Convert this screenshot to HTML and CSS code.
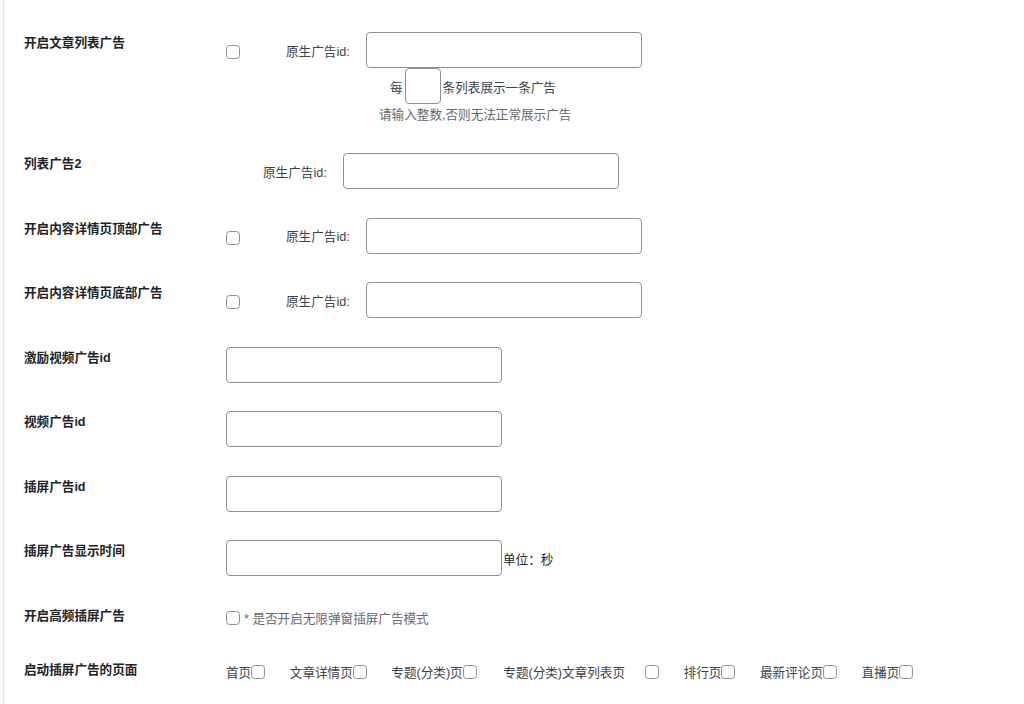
FILE: index.html
```html
<!DOCTYPE html>
<html lang="zh-CN">
<head>
<meta charset="utf-8">
<title>广告设置</title>
<link rel="stylesheet" href="styles.css">
</head>
<body>
<div class="wrap">
  <div class="form">
    <div class="row">
      <div class="th">开启文章列表广告</div>
      <div class="td col">
        <div class="line">
          <input type="checkbox" class="cb cb-gap">
          <span class="idlabel">原生广告id:</span>
          <input type="text" class="txt">
        </div>
        <div class="line every">
          <span>每</span><input type="text" class="small"><span>条列表展示一条广告</span>
        </div>
        <div class="hint">请输入整数,否则无法正常展示广告</div>
      </div>
    </div>

    <div class="row">
      <div class="th">列表广告2</div>
      <div class="td">
        <div class="line indent2">
          <span class="idlabel">原生广告id:</span>
          <input type="text" class="txt">
        </div>
      </div>
    </div>

    <div class="row">
      <div class="th">开启内容详情页顶部广告</div>
      <div class="td">
        <div class="line">
          <input type="checkbox" class="cb cb-gap">
          <span class="idlabel">原生广告id:</span>
          <input type="text" class="txt">
        </div>
      </div>
    </div>

    <div class="row">
      <div class="th">开启内容详情页底部广告</div>
      <div class="td">
        <div class="line">
          <input type="checkbox" class="cb cb-gap">
          <span class="idlabel">原生广告id:</span>
          <input type="text" class="txt">
        </div>
      </div>
    </div>

    <div class="row">
      <div class="th">激励视频广告id</div>
      <div class="td"><input type="text" class="txt"></div>
    </div>

    <div class="row">
      <div class="th">视频广告id</div>
      <div class="td"><input type="text" class="txt"></div>
    </div>

    <div class="row">
      <div class="th">插屏广告id</div>
      <div class="td"><input type="text" class="txt"></div>
    </div>

    <div class="row">
      <div class="th">插屏广告显示时间</div>
      <div class="td"><input type="text" class="txt"><span class="unit">单位：秒</span></div>
    </div>

    <div class="row">
      <div class="th">开启高频插屏广告</div>
      <div class="td">
        <input type="checkbox" class="cb">
        <span class="desc">* 是否开启无限弹窗插屏广告模式</span>
      </div>
    </div>

    <div class="row">
      <div class="th">启动插屏广告的页面</div>
      <div class="td pages">
        <span class="page">首页<input type="checkbox" class="cb"></span>
        <span class="page">文章详情页<input type="checkbox" class="cb"></span>
        <span class="page wide">专题(分类)页<input type="checkbox" class="cb"></span>
        <span class="page">专题(分类)文章列表页<input type="checkbox" class="cb cb-sp"></span>
        <span class="page">排行页<input type="checkbox" class="cb"></span>
        <span class="page">最新评论页<input type="checkbox" class="cb"></span>
        <span class="page">直播页<input type="checkbox" class="cb"></span>
      </div>
    </div>
  </div>
</div>
</body>
</html>
```

FILE: styles.css
```css
html, body {
  margin: 0;
  padding: 0;
  background: #fff;
}

body {
  font-family: "Liberation Sans", "Noto Sans CJK SC", sans-serif;
  font-size: 12.6px;
  color: #3c434a;
}

.wrap {
  margin-left: 3px;
  border-left: 1px solid #e2e4e7;
  min-height: 704px;
  padding: 17.75px 0 0 20px;
  box-sizing: border-box;
}

.form {
  display: flex;
  flex-direction: column;
}

.row {
  display: flex;
  align-items: center;
}

.th {
  width: 202px;
  flex-shrink: 0;
  align-self: flex-start;
  padding: 17.25px 0 19.75px;
  line-height: 17px;
  font-weight: 600;
  color: #1d2327;
}

.td {
  padding: 14.25px 0;
  display: flex;
  align-items: center;
}

.td.col {
  flex-direction: column;
  align-items: flex-start;
}

.line {
  display: flex;
  align-items: center;
  height: 36px;
}

.indent2 {
  margin-left: 37px;
}

.every {
  margin-left: 164px;
}

.every span:first-child {
  margin-right: 2px;
}

.every span:last-child {
  margin-left: 2px;
}

.hint {
  margin-left: 153px;
  height: 20.75px;
  line-height: 23px;
  color: #646970;
}

.cb {
  -webkit-appearance: none;
  appearance: none;
  width: 14px;
  height: 14px;
  margin: 0;
  border: 1px solid #8c8f94;
  border-radius: 3.5px;
  background: #fff;
  box-sizing: border-box;
  flex-shrink: 0;
}

.cb-gap {
  margin: 4px 46px 0 0;
}

.idlabel {
  width: 80px;
  flex-shrink: 0;
  white-space: nowrap;
}

.txt {
  width: 276px;
  height: 36px;
  box-sizing: border-box;
  margin: 0;
  padding: 0 8px;
  border: 1px solid #8c8f94;
  border-radius: 4px;
  background: #fff;
  font: inherit;
}

.small {
  width: 36px;
  height: 36px;
  box-sizing: border-box;
  margin: 0;
  padding: 0 4px;
  border: 1px solid #8c8f94;
  border-radius: 4px;
  background: #fff;
  font: inherit;
}

.unit {
  margin-left: 1px;
  color: #1d2327;
}

.desc {
  margin-left: 4px;
  color: #646970;
  white-space: pre;
}

.pages {
  gap: 24.6px;
}

.page {
  display: inline-flex;
  align-items: center;
  white-space: nowrap;
  color: #3c434a;
}

.page.wide {
  margin-right: 2px;
}

.cb-sp {
  margin-left: 20px;
}
```
